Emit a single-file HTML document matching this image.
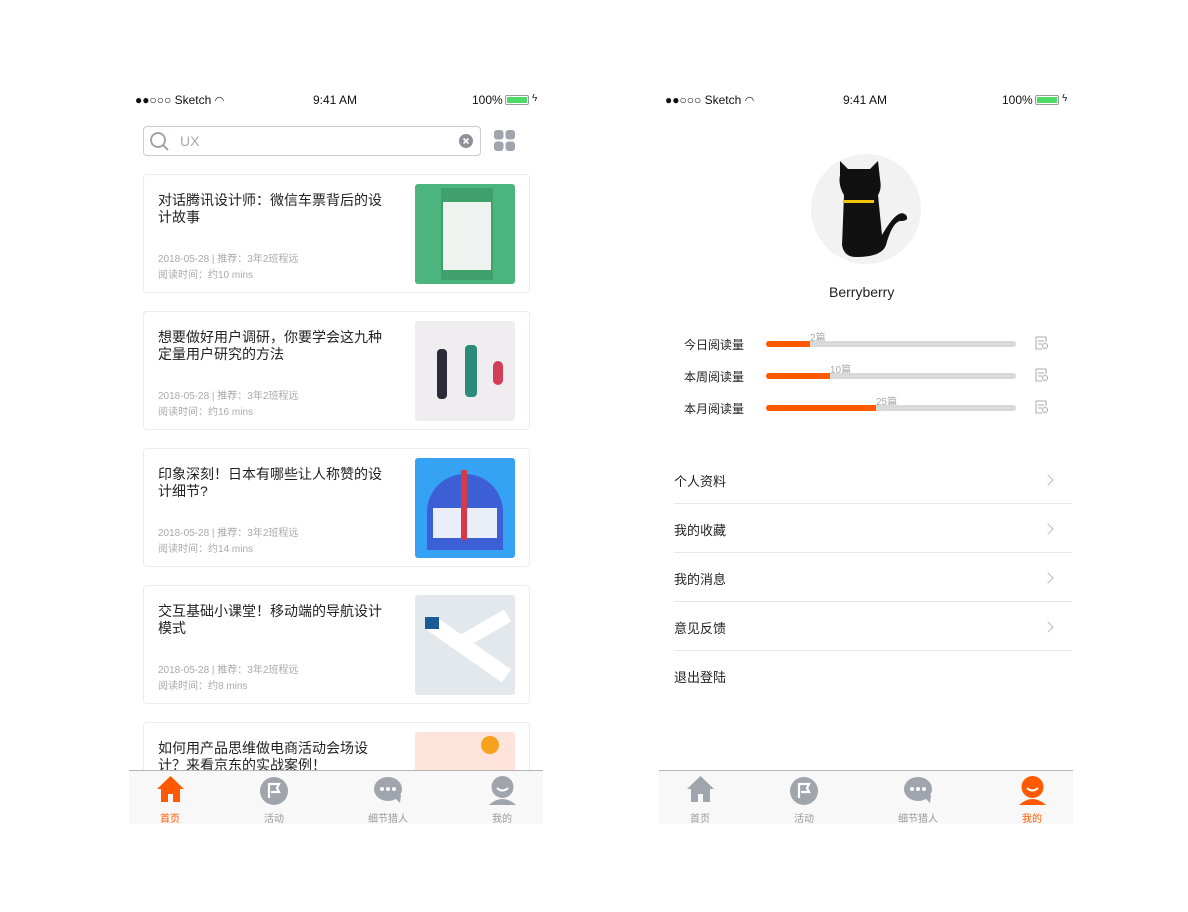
<!DOCTYPE html>
<html><head><meta charset="utf-8"><style>
*{margin:0;padding:0;box-sizing:border-box}
body{width:1188px;height:912px;background:#fff;position:relative;overflow:hidden;font-family:"Liberation Sans","Noto Sans CJK SC",sans-serif;color:#222}
.a{position:absolute}
.sb{font-size:12px;color:#111}
.card{position:absolute;left:143px;width:387px;height:119px;border:1px solid #ececec;border-radius:4px;background:#fff}
.card .t{position:absolute;left:14px;top:17px;width:232px;font-size:14px;line-height:17px;color:#222}
.card .m{position:absolute;left:14px;font-size:10px;color:#aaa}
.card .img{position:absolute;left:271px;top:9px;width:100px;height:100px;border-radius:3px;overflow:hidden}
.tab{position:absolute;top:770px;width:414px;height:54px;background:#f8f8f8;border-top:1px solid #b4b4b4}
.tl{position:absolute;top:40px;font-size:10px;color:#999;width:60px;text-align:center}
.row{position:absolute;left:684px;font-size:12px;color:#222}
.bar{position:absolute;left:766px;width:250px;height:6px;border-radius:3px;background:#d9d9d9;overflow:hidden}
.bar i{display:block;height:6px;background:#ff5a00}
.num{position:absolute;font-size:10px;color:#aaa}
.mi{position:absolute;left:674px;width:398px;height:49px;border-bottom:1px solid #e8e8e8;font-size:13px;color:#222}
.mi span{position:absolute;top:16px}
.chev{position:absolute;right:20px;top:21px;width:8px;height:8px;border-right:1.5px solid #bbb;border-top:1.5px solid #bbb;transform:rotate(45deg)}
</style></head><body>

<!-- LEFT PHONE -->
<div class="a sb" style="left:135px;top:93px">●●○○○ Sketch <span style="font-size:11px">&#x25E0;</span></div>
<div class="a sb" style="left:313px;top:93px">9:41 AM</div>
<div class="a sb" style="left:472px;top:93px">100%</div>
<div class="a" style="left:505px;top:95px;width:24px;height:10px;border:1px solid #999;border-radius:2px;padding:1px"><div style="background:#4cd964;height:100%"></div></div>
<div class="a" style="left:532px;top:93px;font-size:10px">ϟ</div>

<div class="a" style="left:143px;top:126px;width:338px;height:30px;border:1px solid #c8ccd2;border-radius:4px"></div>
<svg class="a" style="left:149px;top:131px" width="22" height="22"><circle cx="9" cy="9" r="7" fill="none" stroke="#a0a5ad" stroke-width="2"/><line x1="14" y1="14" x2="19" y2="19" stroke="#a0a5ad" stroke-width="2"/></svg>
<div class="a" style="left:180px;top:133px;font-size:14px;color:#a5a9b0">UX</div>
<svg class="a" style="left:459px;top:134px" width="14" height="14"><circle cx="7" cy="7" r="7" fill="#8e9198"/><path d="M4.5 4.5l5 5M9.5 4.5l-5 5" stroke="#fff" stroke-width="1.6"/></svg>
<svg class="a" style="left:494px;top:130px" width="22" height="22" fill="#a0a5ad"><rect x="0" y="0" width="9.5" height="9.5" rx="3"/><rect x="11.5" y="0" width="9.5" height="9.5" rx="3"/><rect x="0" y="11.5" width="9.5" height="9.5" rx="3"/><rect x="11.5" y="11.5" width="9.5" height="9.5" rx="3"/></svg>

<div class="card" style="top:174px"><div class="t">对话腾讯设计师：微信车票背后的设计故事</div><div class="m" style="top:75px">2018-05-28 | 推荐：3年2班程远</div><div class="m" style="top:91px">阅读时间：约10 mins</div><div class="img" style="background:#4bb57d"><div style="position:absolute;left:26px;top:4px;width:52px;height:92px;background:#3fa06c"></div><div style="position:absolute;left:28px;top:18px;width:48px;height:68px;background:#eef3ef"></div></div></div>
<div class="card" style="top:311px"><div class="t">想要做好用户调研，你要学会这九种定量用户研究的方法</div><div class="m" style="top:75px">2018-05-28 | 推荐：3年2班程远</div><div class="m" style="top:91px">阅读时间：约16 mins</div><div class="img" style="background:#f0edf1"><div style="position:absolute;left:22px;top:28px;width:10px;height:50px;background:#2a2a3a;border-radius:4px"></div><div style="position:absolute;left:50px;top:24px;width:12px;height:52px;background:#2d8b7a;border-radius:4px"></div><div style="position:absolute;left:78px;top:40px;width:10px;height:24px;background:#d23d57;border-radius:5px"></div></div></div>
<div class="card" style="top:448px"><div class="t">印象深刻！日本有哪些让人称赞的设计细节?</div><div class="m" style="top:75px">2018-05-28 | 推荐：3年2班程远</div><div class="m" style="top:91px">阅读时间：约14 mins</div><div class="img" style="background:#35a2f4"><div style="position:absolute;left:12px;top:16px;width:76px;height:76px;border-radius:38px 38px 0 0;background:#3c5fd6"></div><div style="position:absolute;left:18px;top:50px;width:64px;height:30px;background:#e9eef8"></div><div style="position:absolute;left:46px;top:12px;width:6px;height:70px;background:#d63a48"></div></div></div>
<div class="card" style="top:585px"><div class="t">交互基础小课堂！移动端的导航设计模式</div><div class="m" style="top:75px">2018-05-28 | 推荐：3年2班程远</div><div class="m" style="top:91px">阅读时间：约8 mins</div><div class="img" style="background:#e3e8ec"><div style="position:absolute;left:6px;top:46px;width:94px;height:16px;background:#fff;transform:rotate(35deg)"></div><div style="position:absolute;left:46px;top:26px;width:50px;height:14px;background:#fff;transform:rotate(-30deg)"></div><div style="position:absolute;left:10px;top:22px;width:14px;height:12px;background:#1a5a96"></div></div></div>
<div class="card" style="top:722px;height:60px"><div class="t">如何用产品思维做电商活动会场设计？来看京东的实战案例！</div><div class="img" style="background:#fde3da;height:50px"><div style="position:absolute;left:66px;top:4px;width:18px;height:18px;border-radius:50%;background:#f7a11e"></div></div></div>

<div class="tab" style="left:129px"></div>
<svg class="a" style="left:156px;top:775px" width="29" height="28"><path d="M14.5 1L1 14h4v13h7v-8h5v8h7V14h4z" fill="#ff5a00"/></svg>
<div class="tl" style="left:140px;top:810px;color:#ff5a00">首页</div>
<svg class="a" style="left:260px;top:777px" width="28" height="28"><circle cx="14" cy="14" r="14" fill="#a0a4ac"/><path d="M9 21V7h10l-2 4 2 4H11" fill="none" stroke="#fff" stroke-width="2.2"/></svg>
<div class="tl" style="left:244px;top:810px">活动</div>
<svg class="a" style="left:374px;top:777px" width="30" height="28"><ellipse cx="14" cy="12" rx="14" ry="12" fill="#a0a4ac"/><path d="M20 20l6 6 1-8z" fill="#a0a4ac"/><circle cx="8" cy="12" r="2" fill="#fff"/><circle cx="14" cy="12" r="2" fill="#fff"/><circle cx="20" cy="12" r="2" fill="#fff"/></svg>
<div class="tl" style="left:358px;top:810px">细节猎人</div>
<svg class="a" style="left:488px;top:776px" width="29" height="29"><circle cx="14.5" cy="11" r="11" fill="#a0a4ac"/><path d="M9 12q5.5 5 11 0" fill="none" stroke="#fff" stroke-width="2"/><path d="M1 29q13.5-12 27 0z" fill="#a0a4ac"/></svg>
<div class="tl" style="left:472px;top:810px">我的</div>

<!-- RIGHT PHONE -->
<div class="a sb" style="left:665px;top:93px">●●○○○ Sketch <span style="font-size:11px">&#x25E0;</span></div>
<div class="a sb" style="left:843px;top:93px">9:41 AM</div>
<div class="a sb" style="left:1002px;top:93px">100%</div>
<div class="a" style="left:1035px;top:95px;width:24px;height:10px;border:1px solid #999;border-radius:2px;padding:1px"><div style="background:#4cd964;height:100%"></div></div>
<div class="a" style="left:1062px;top:93px;font-size:10px">ϟ</div>

<div class="a" style="left:811px;top:154px;width:110px;height:110px;border-radius:50%;background:#f2f2f2"></div>
<svg class="a" style="left:830px;top:156px" width="80" height="110"><path d="M10 5l8 8h22l8-8 2 18q2 10-2 16l4 40q16-28 24-20 4 6-6 6-8 2-14 24-4 12-30 12-12 0-14-12l2-50q-6-10-4-20z" fill="#111"/><rect x="14" y="44" width="30" height="3" fill="#f5c400"/></svg>
<div class="a" style="left:829px;top:284px;font-size:14px;color:#222">Berryberry</div>

<div class="row" style="top:336px">今日阅读量</div><div class="num" style="left:810px;top:329px">2篇</div><div class="bar" style="top:341px"><i style="width:44px"></i></div>
<div class="row" style="top:368px">本周阅读量</div><div class="num" style="left:830px;top:361px">10篇</div><div class="bar" style="top:373px"><i style="width:64px"></i></div>
<div class="row" style="top:400px">本月阅读量</div><div class="num" style="left:876px;top:393px">25篇</div><div class="bar" style="top:405px"><i style="width:110px"></i></div>
<svg class="a" style="left:1035px;top:336px" width="14" height="14"><path d="M1 1h10v5M1 1v12h6M3 5h6M3 8h4" fill="none" stroke="#aaa"/><circle cx="10" cy="10" r="2.5" fill="none" stroke="#aaa"/></svg>
<svg class="a" style="left:1035px;top:368px" width="14" height="14"><path d="M1 1h10v5M1 1v12h6M3 5h6M3 8h4" fill="none" stroke="#aaa"/><circle cx="10" cy="10" r="2.5" fill="none" stroke="#aaa"/></svg>
<svg class="a" style="left:1035px;top:400px" width="14" height="14"><path d="M1 1h10v5M1 1v12h6M3 5h6M3 8h4" fill="none" stroke="#aaa"/><circle cx="10" cy="10" r="2.5" fill="none" stroke="#aaa"/></svg>

<div class="mi" style="top:455px"><span>个人资料</span><div class="chev"></div></div>
<div class="mi" style="top:504px"><span>我的收藏</span><div class="chev"></div></div>
<div class="mi" style="top:553px"><span>我的消息</span><div class="chev"></div></div>
<div class="mi" style="top:602px"><span>意见反馈</span><div class="chev"></div></div>
<div class="mi" style="top:651px;border:none"><span>退出登陆</span></div>

<div class="tab" style="left:659px"></div>
<svg class="a" style="left:686px;top:775px" width="29" height="28"><path d="M14.5 1L1 14h4v13h7v-8h5v8h7V14h4z" fill="#a0a4ac"/></svg>
<div class="tl" style="left:670px;top:810px">首页</div>
<svg class="a" style="left:790px;top:777px" width="28" height="28"><circle cx="14" cy="14" r="14" fill="#a0a4ac"/><path d="M9 21V7h10l-2 4 2 4H11" fill="none" stroke="#fff" stroke-width="2.2"/></svg>
<div class="tl" style="left:774px;top:810px">活动</div>
<svg class="a" style="left:904px;top:777px" width="30" height="28"><ellipse cx="14" cy="12" rx="14" ry="12" fill="#a0a4ac"/><path d="M20 20l6 6 1-8z" fill="#a0a4ac"/><circle cx="8" cy="12" r="2" fill="#fff"/><circle cx="14" cy="12" r="2" fill="#fff"/><circle cx="20" cy="12" r="2" fill="#fff"/></svg>
<div class="tl" style="left:888px;top:810px">细节猎人</div>
<svg class="a" style="left:1018px;top:776px" width="29" height="29"><circle cx="14.5" cy="11" r="11" fill="#ff5a00"/><path d="M9 12q5.5 5 11 0" fill="none" stroke="#fff" stroke-width="2"/><path d="M1 29q13.5-12 27 0z" fill="#ff5a00"/></svg>
<div class="tl" style="left:1002px;top:810px;color:#ff5a00">我的</div>
</body></html>
